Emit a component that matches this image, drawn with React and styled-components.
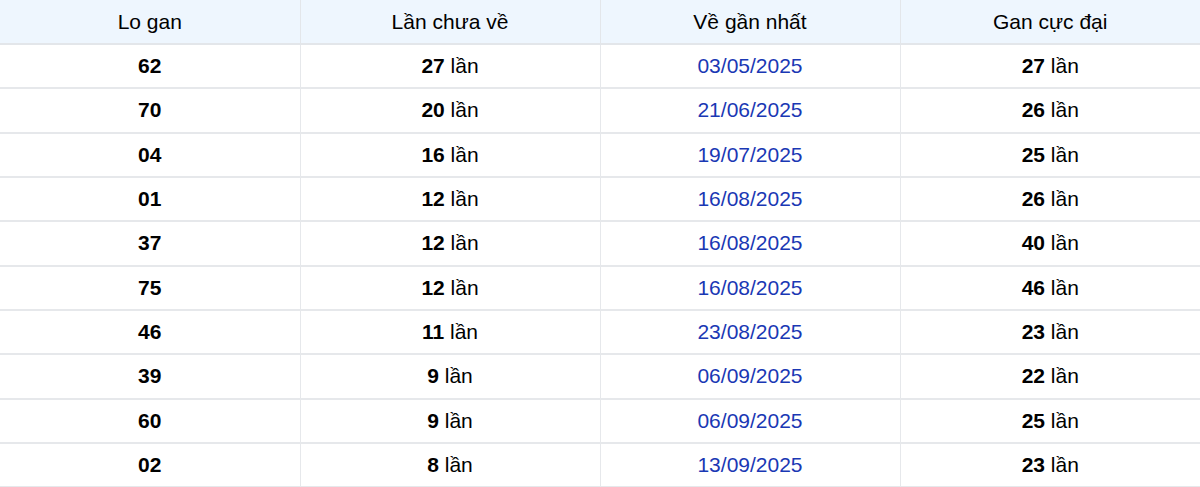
import React from "react";
import styled, { createGlobalStyle } from "styled-components";

const GlobalStyle = createGlobalStyle`
  html, body {
    margin: 0;
    padding: 0;
    background: #ffffff;
  }
  body {
    font-family: "Liberation Sans", Arial, sans-serif;
  }
`;

const Table = styled.table`
  width: 1200px;
  border-collapse: collapse;
  table-layout: fixed;
  font-size: 21px;
  color: #000000;
`;

const HeadCell = styled.th`
  height: 43px;
  padding: 0;
  font-weight: 400;
  text-align: center;
  background: #eef6fe;
  border-bottom: 2px solid #e3e6ea;
  border-right: 1px solid #e3e6ea;
  &:last-child {
    border-right: none;
  }
`;

const Row = styled.tr`
  height: 44.33px;
`;

const Cell = styled.td`
  padding: 0;
  text-align: center;
  border-bottom: 2px solid #e6e8eb;
  border-right: 1px solid #e6e8eb;
  color: ${(p) => (p.$date ? "#1a38b4" : "#000000")};
  &:last-child {
    border-right: none;
  }
`;

const Num = styled.b`
  font-weight: 700;
`;

const rows = [
  ["62", 27, "03/05/2025", 27],
  ["70", 20, "21/06/2025", 26],
  ["04", 16, "19/07/2025", 25],
  ["01", 12, "16/08/2025", 26],
  ["37", 12, "16/08/2025", 40],
  ["75", 12, "16/08/2025", 46],
  ["46", 11, "23/08/2025", 23],
  ["39", 9, "06/09/2025", 22],
  ["60", 9, "06/09/2025", 25],
  ["02", 8, "13/09/2025", 23],
];

const App = () => {
  return (
    <>
      <GlobalStyle />
      <Table>
        <thead>
          <tr>
            <HeadCell>Lo gan</HeadCell>
            <HeadCell>Lần chưa về</HeadCell>
            <HeadCell>Về gần nhất</HeadCell>
            <HeadCell>Gan cực đại</HeadCell>
          </tr>
        </thead>
        <tbody>
          {rows.map(([lo, chua, date, max]) => (
            <Row key={lo}>
              <Cell>
                <Num>{lo}</Num>
              </Cell>
              <Cell>
                <Num>{chua}</Num> lần
              </Cell>
              <Cell $date>{date}</Cell>
              <Cell>
                <Num>{max}</Num> lần
              </Cell>
            </Row>
          ))}
        </tbody>
      </Table>
    </>
  );
};

export default App;
